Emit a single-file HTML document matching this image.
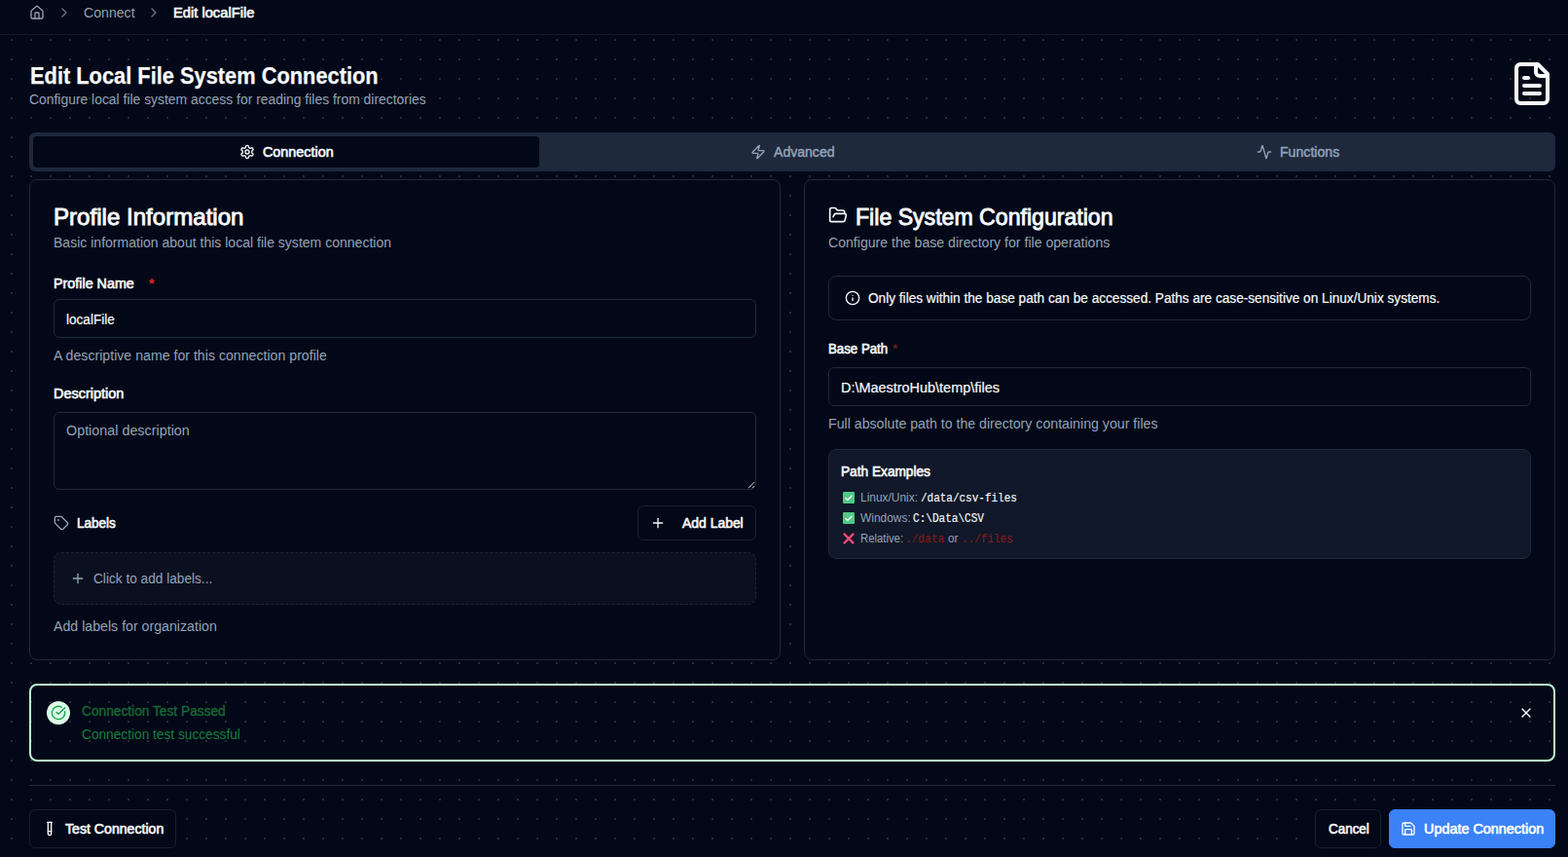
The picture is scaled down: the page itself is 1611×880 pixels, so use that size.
<!DOCTYPE html>
<html lang="en">
<head>
<meta charset="utf-8">
<title>Edit localFile</title>
<style>
*{box-sizing:border-box;margin:0;padding:0}
html,body{width:1611px;height:880px;overflow:hidden;background:#020817}
body{font-family:"Liberation Sans",sans-serif;font-size:14px;color:#f8fafc;position:relative}
.abs{position:absolute}
.t{position:absolute;white-space:nowrap;transform-origin:0 50%;font-weight:400;font-style:normal;line-height:normal}
.mut{color:#94a3b8}
svg.ic{position:absolute;fill:none;stroke:currentColor;stroke-width:2;stroke-linecap:round;stroke-linejoin:round}
#topbar{left:0;top:0;width:1611px;height:36px;border-bottom:1px solid #111a2b;background:#020817}
#main{left:0;top:36px;width:1611px;height:844px;background-color:#020817;
 background-image:radial-gradient(circle,#222c3e 0.9px,transparent 1.3px);background-size:20px 20px;background-position:2px -5px}
.card{position:absolute;border:1px solid #1e293b;border-radius:8px;background:#020817}
.inp{position:absolute;border:1px solid #1e293b;border-radius:6px;background:#020817}
.btn{position:absolute;border:1px solid #172033;border-radius:6px;background:#020817;height:40px}
</style>
</head>
<body>
<main id="main" class="abs"></main>
<header id="topbar" class="abs"></header>

<!-- breadcrumb -->
<nav aria-label="breadcrumb">
<svg class="ic mut" style="left:30px;top:5px" width="16" height="16" viewBox="0 0 24 24"><path d="M15 21v-8a1 1 0 0 0-1-1h-4a1 1 0 0 0-1 1v8"/><path d="M3 10a2 2 0 0 1 .709-1.528l7-5.999a2 2 0 0 1 2.582 0l7 5.999A2 2 0 0 1 21 10v9a2 2 0 0 1-2 2H5a2 2 0 0 1-2-2z"/></svg>
<svg class="ic" style="left:58px;top:5px;color:#64748b" width="16" height="16" viewBox="0 0 24 24"><path d="m9 18 6-6-6-6"/></svg>
<span class="t" style="left:85.87px;top:5.00px;font-size:14px;color:#94a3b8;transform:scaleX(1.0081);">Connect</span>
<svg class="ic" style="left:150px;top:5px;color:#64748b" width="16" height="16" viewBox="0 0 24 24"><path d="m9 18 6-6-6-6"/></svg>
<span class="t" style="left:178.29px;top:5.00px;font-size:14px;color:#f8fafc;-webkit-text-stroke:0.6px currentColor;transform:scaleX(1.0503);">Edit localFile</span>
</nav>

<!-- page header -->
<h1 class="t" style="left:30.58px;top:64.00px;font-size:24px;color:#f8fafc;font-weight:700;-webkit-text-stroke:0.25px currentColor;transform:scaleX(0.9091);">Edit Local File System Connection</h1>
<p class="t" style="left:30.28px;top:94.00px;font-size:14px;color:#94a3b8;transform:scaleX(0.9923);">Configure local file system access for reading files from directories</p>
<svg class="ic" style="left:1550px;top:62px" width="48" height="48" viewBox="0 0 24 24"><path d="M15 2H6a2 2 0 0 0-2 2v16a2 2 0 0 0 2 2h12a2 2 0 0 0 2-2V7Z"/><path d="M14 2v4a2 2 0 0 0 2 2h4"/><path d="M10 9H8"/><path d="M16 13H8"/><path d="M16 17H8"/></svg>

<!-- tabs -->
<div class="abs" role="tablist" style="left:30px;top:136px;width:1568px;height:40px;background:#1e293b;border-radius:6px"></div>
<div class="abs" style="left:34px;top:140px;width:520px;height:32px;background:#020817;border-radius:4px"></div>
<svg class="ic" style="left:246px;top:148px" width="16" height="16" viewBox="0 0 24 24"><path d="M12.22 2h-.44a2 2 0 0 0-2 2v.18a2 2 0 0 1-1 1.73l-.43.25a2 2 0 0 1-2 0l-.15-.08a2 2 0 0 0-2.73.73l-.22.38a2 2 0 0 0 .73 2.73l.15.1a2 2 0 0 1 1 1.72v.51a2 2 0 0 1-1 1.74l-.15.09a2 2 0 0 0-.73 2.73l.22.38a2 2 0 0 0 2.73.73l.15-.08a2 2 0 0 1 2 0l.43.25a2 2 0 0 1 1 1.73V20a2 2 0 0 0 2 2h.44a2 2 0 0 0 2-2v-.18a2 2 0 0 1 1-1.73l.43-.25a2 2 0 0 1 2 0l.15.08a2 2 0 0 0 2.73-.73l.22-.39a2 2 0 0 0-.73-2.73l-.15-.08a2 2 0 0 1-1-1.74v-.5a2 2 0 0 1 1-1.74l.15-.09a2 2 0 0 0 .73-2.73l-.22-.38a2 2 0 0 0-2.73-.73l-.15.08a2 2 0 0 1-2 0l-.43-.25a2 2 0 0 1-1-1.73V4a2 2 0 0 0-2-2z"/><circle cx="12" cy="12" r="3"/></svg>
<span class="t" style="left:269.97px;top:148.00px;font-size:14px;color:#f8fafc;-webkit-text-stroke:0.6px currentColor;transform:scaleX(1.0255);">Connection</span>
<svg class="ic mut" style="left:771px;top:148px" width="16" height="16" viewBox="0 0 24 24"><path d="M4 14a1 1 0 0 1-.78-1.63l9.9-10.2a.5.5 0 0 1 .86.46l-1.92 6.02A1 1 0 0 0 13 10h7a1 1 0 0 1 .78 1.63l-9.9 10.2a.5.5 0 0 1-.86-.46l1.92-6.02A1 1 0 0 0 11 14z"/></svg>
<span class="t" style="left:794.80px;top:148.00px;font-size:14px;color:#94a3b8;-webkit-text-stroke:0.45px currentColor;transform:scaleX(1.0040);">Advanced</span>
<svg class="ic mut" style="left:1291px;top:148px" width="16" height="16" viewBox="0 0 24 24"><path d="M22 12h-2.48a2 2 0 0 0-1.93 1.46l-2.35 8.36a.25.25 0 0 1-.48 0L9.24 2.18a.25.25 0 0 0-.48 0l-2.35 8.36A2 2 0 0 1 4.49 12H2"/></svg>
<span class="t" style="left:1315.27px;top:148.00px;font-size:14px;color:#94a3b8;-webkit-text-stroke:0.45px currentColor;transform:scaleX(1.0085);">Functions</span>

<!-- left card -->
<section class="card" style="left:30px;top:184px;width:772px;height:494px"></section>
<h3 class="t" style="left:55.11px;top:209.00px;font-size:24px;color:#f8fafc;-webkit-text-stroke:0.9px currentColor;transform:scaleX(1.0038);">Profile Information</h3>
<p class="t" style="left:54.96px;top:241.00px;font-size:14px;color:#94a3b8;transform:scaleX(1.0022);">Basic information about this local file system connection</p>
<label class="t" style="left:55.11px;top:283.00px;font-size:14px;color:#f8fafc;-webkit-text-stroke:0.6px currentColor;transform:scaleX(1.0232);">Profile Name</label>
<span class="t" style="left:153.24px;top:283.00px;font-size:14px;color:#dc2626;font-weight:700;transform:scaleX(1.0290);">*</span>
<div class="inp" style="left:55px;top:307px;width:722px;height:40px"></div>
<span class="t" style="left:68.20px;top:320.00px;font-size:14px;color:#f8fafc;-webkit-text-stroke:0.2px currentColor;transform:scaleX(0.9686);">localFile</span>
<p class="t" style="left:55.29px;top:357.00px;font-size:14px;color:#94a3b8;transform:scaleX(1.0108);">A descriptive name for this connection profile</p>
<label class="t" style="left:55.40px;top:396.00px;font-size:14px;color:#f8fafc;-webkit-text-stroke:0.6px currentColor;transform:scaleX(1.0334);">Description</label>
<div class="inp" style="left:55px;top:423px;width:722px;height:80px"></div>
<svg class="abs" style="left:768px;top:494px" width="8" height="8" viewBox="0 0 8 8" fill="none" stroke="#d4d4d8" stroke-width="1"><path d="M7.2 1 1 7.2M7.2 5 5 7.2"/></svg>
<span class="t" style="left:67.91px;top:434.00px;font-size:14px;color:#94a3b8;transform:scaleX(1.0245);">Optional description</span>
<svg class="ic mut" style="left:55px;top:529px" width="16" height="16" viewBox="0 0 24 24"><path d="M12.586 2.586A2 2 0 0 0 11.172 2H4a2 2 0 0 0-2 2v7.172a2 2 0 0 0 .586 1.414l8.704 8.704a2.426 2.426 0 0 0 3.42 0l6.58-6.58a2.426 2.426 0 0 0 0-3.42z"/><circle cx="7.5" cy="7.5" r=".5" fill="currentColor"/></svg>
<label class="t" style="left:79.15px;top:529.00px;font-size:14px;color:#f8fafc;-webkit-text-stroke:0.6px currentColor;transform:scaleX(0.9658);">Labels</label>
<div class="btn" style="left:655px;top:519px;width:122px;height:36px"></div>
<svg class="ic" style="left:668px;top:529px" width="16" height="16" viewBox="0 0 24 24"><path d="M5 12h14"/><path d="M12 5v14"/></svg>
<span class="t" style="left:701.33px;top:529.00px;font-size:14px;color:#f8fafc;-webkit-text-stroke:0.6px currentColor;transform:scaleX(0.9946);">Add Label</span>
<div class="abs" style="left:55px;top:567px;width:722px;height:54px;border:1px dashed #1b2437;border-radius:8px;background:#0a1020"></div>
<svg class="ic mut" style="left:72px;top:586px" width="16" height="16" viewBox="0 0 24 24"><path d="M5 12h14"/><path d="M12 5v14"/></svg>
<span class="t" style="left:95.89px;top:586.00px;font-size:14px;color:#94a3b8;transform:scaleX(0.9756);">Click to add labels...</span>
<p class="t" style="left:55.09px;top:635.00px;font-size:14px;color:#94a3b8;transform:scaleX(1.0124);">Add labels for organization</p>

<!-- right card -->
<section class="card" style="left:826px;top:184px;width:772px;height:494px"></section>
<svg class="ic" style="left:851px;top:211px" width="20" height="20" viewBox="0 0 24 24"><path d="m6 14 1.5-2.9A2 2 0 0 1 9.24 10H20a2 2 0 0 1 1.94 2.5l-1.54 6a2 2 0 0 1-1.95 1.5H4a2 2 0 0 1-2-2V5a2 2 0 0 1 2-2h3.9a2 2 0 0 1 1.69.9l.81 1.2a2 2 0 0 0 1.67.9H18a2 2 0 0 1 2 2v2"/></svg>
<h3 class="t" style="left:879.46px;top:209.00px;font-size:24px;color:#f8fafc;-webkit-text-stroke:0.9px currentColor;transform:scaleX(0.9627);">File System Configuration</h3>
<p class="t" style="left:851.17px;top:241.00px;font-size:14px;color:#94a3b8;transform:scaleX(1.0074);">Configure the base directory for file operations</p>
<div class="abs" role="alert" style="left:851px;top:283px;width:722px;height:46px;border:1px solid #1e293b;border-radius:8px"></div>
<svg class="ic" style="left:868px;top:298px" width="16" height="16" viewBox="0 0 24 24"><circle cx="12" cy="12" r="10"/><path d="M12 16v-4"/><path d="M12 8h.01"/></svg>
<span class="t" style="left:891.86px;top:298.00px;font-size:14px;color:#f8fafc;-webkit-text-stroke:0.2px currentColor;transform:scaleX(0.9738);">Only files within the base path can be accessed. Paths are case-sensitive on Linux/Unix systems.</span>
<label class="t" style="left:851.17px;top:350.00px;font-size:14px;color:#f8fafc;-webkit-text-stroke:0.6px currentColor;transform:scaleX(0.9471);">Base Path</label>
<span class="t" style="left:916.89px;top:350.00px;font-size:14px;color:#8b1c1c;transform:scaleX(1.0291);">*</span>
<div class="inp" style="left:851px;top:377px;width:722px;height:40px"></div>
<span class="t" style="left:863.97px;top:390.00px;font-size:14px;color:#f8fafc;-webkit-text-stroke:0.2px currentColor;transform:scaleX(1.0313);">D:\MaestroHub\temp\files</span>
<p class="t" style="left:850.95px;top:427.00px;font-size:14px;color:#94a3b8;transform:scaleX(1.0115);">Full absolute path to the directory containing your files</p>
<div class="abs" style="left:851px;top:461px;width:722px;height:113px;border:1px solid #1e293b;border-radius:8px;background:#101829"></div>
<h4 class="t" style="left:863.85px;top:476.00px;font-size:14px;color:#f8fafc;-webkit-text-stroke:0.6px currentColor;transform:scaleX(0.9766);">Path Examples</h4>
<svg class="abs" role="img" aria-label="✅" style="left:866px;top:505px" width="12" height="12" viewBox="0 0 12 12"><rect width="12" height="12" rx="1.2" fill="#4fc986"/><path d="M2.6 6.3 4.9 8.4 9.5 3.7" fill="none" stroke="#fff" stroke-width="1.4"/></svg>
<span class="t" style="left:884.00px;top:504.00px;font-size:12px;color:#94a3b8;transform:scaleX(0.9930);">Linux/Unix:</span>
<code class="t" style="left:945.92px;top:505.00px;font-size:12px;color:#f8fafc;font-family:'Liberation Mono',monospace;-webkit-text-stroke:0.15px currentColor;transform:scaleX(0.9148);">/data/csv-files</code>
<svg class="abs" role="img" aria-label="✅" style="left:866px;top:526px" width="12" height="12" viewBox="0 0 12 12"><rect width="12" height="12" rx="1.2" fill="#4fc986"/><path d="M2.6 6.3 4.9 8.4 9.5 3.7" fill="none" stroke="#fff" stroke-width="1.4"/></svg>
<span class="t" style="left:884.13px;top:525.00px;font-size:12px;color:#94a3b8;transform:scaleX(0.9945);">Windows:</span>
<code class="t" style="left:938.41px;top:526.00px;font-size:12px;color:#f8fafc;font-family:'Liberation Mono',monospace;-webkit-text-stroke:0.15px currentColor;transform:scaleX(0.9212);">C:\Data\CSV</code>
<svg class="abs" role="img" aria-label="❌" style="left:866px;top:547px" width="12" height="12" viewBox="0 0 12 12"><path d="M0.9 0.9 11.1 11.1M11.1 0.9 0.9 11.1" fill="none" stroke="#f4487a" stroke-width="2.2"/></svg>
<span class="t" style="left:884.05px;top:546.00px;font-size:12px;color:#94a3b8;transform:scaleX(0.9431);">Relative:</span>
<code class="t" style="left:930.27px;top:547.00px;font-size:12px;color:#851c1c;font-family:'Liberation Mono',monospace;-webkit-text-stroke:0.15px currentColor;transform:scaleX(0.9271);">./data</code>
<span class="t" style="left:974.25px;top:546.00px;font-size:12px;color:#94a3b8;transform:scaleX(0.9732);">or</span>
<code class="t" style="left:987.60px;top:547.00px;font-size:12px;color:#851c1c;font-family:'Liberation Mono',monospace;-webkit-text-stroke:0.15px currentColor;transform:scaleX(0.9161);">../files</code>

<!-- result alert -->
<div class="abs" role="alert" style="left:30px;top:702px;width:1568px;height:80px;border:2px solid #bbf7d0;border-radius:8px"></div>
<div class="abs" style="left:48px;top:720px;width:24px;height:24px;border-radius:50%;background:#dcfce7"></div>
<svg class="ic" style="left:52px;top:724px;color:#16a34a" width="16" height="16" viewBox="0 0 24 24"><path d="M21.801 10A10 10 0 1 1 17 3.335"/><path d="m9 11 3 3L22 4"/></svg>
<h5 class="t" style="left:84.06px;top:722.00px;font-size:14px;color:#166534;-webkit-text-stroke:0.45px currentColor;transform:scaleX(0.9803);">Connection Test Passed</h5>
<div class="t" style="left:84.39px;top:746.00px;font-size:14px;color:#15803d;transform:scaleX(0.9778);">Connection test successful</div>
<svg class="ic" style="left:1560px;top:724px" width="16" height="16" viewBox="0 0 24 24"><path d="M18 6 6 18"/><path d="m6 6 12 12"/></svg>

<!-- footer actions -->
<div class="abs" style="left:30px;top:806px;width:1568px;height:1px;background:#1e293b"></div>
<div class="btn" style="left:30px;top:831px;width:151px"></div>
<svg class="ic" style="left:43px;top:843px" width="16" height="16" viewBox="0 0 24 24"><path d="M14.5 2v17.5c0 1.4-1.1 2.5-2.5 2.5c-1.4 0-2.5-1.1-2.5-2.5V2"/><path d="M8.5 2h7"/><path d="M14.5 16h-5"/></svg>
<span class="t" style="left:67.07px;top:843.00px;font-size:14px;color:#f8fafc;-webkit-text-stroke:0.6px currentColor;transform:scaleX(1.0090);">Test Connection</span>
<div class="btn" style="left:1351px;top:831px;width:68px"></div>
<span class="t" style="left:1364.89px;top:843.00px;font-size:14px;color:#f8fafc;-webkit-text-stroke:0.6px currentColor;transform:scaleX(0.9593);">Cancel</span>
<div class="btn" style="left:1427px;top:831px;width:171px;background:#3b82f6;border-color:#3b82f6"></div>
<svg class="ic" style="left:1439px;top:843px;color:#fff" width="16" height="16" viewBox="0 0 24 24"><path d="M15.2 3a2 2 0 0 1 1.4.6l3.8 3.8a2 2 0 0 1 .6 1.4V19a2 2 0 0 1-2 2H5a2 2 0 0 1-2-2V5a2 2 0 0 1 2-2z"/><path d="M17 21v-7a1 1 0 0 0-1-1H8a1 1 0 0 0-1 1v7"/><path d="M7 3v4a1 1 0 0 0 1 1h7"/></svg>
<span class="t" style="left:1463.29px;top:843.00px;font-size:14px;color:#ffffff;-webkit-text-stroke:0.6px currentColor;transform:scaleX(1.0282);">Update Connection</span>

</body>
</html>
